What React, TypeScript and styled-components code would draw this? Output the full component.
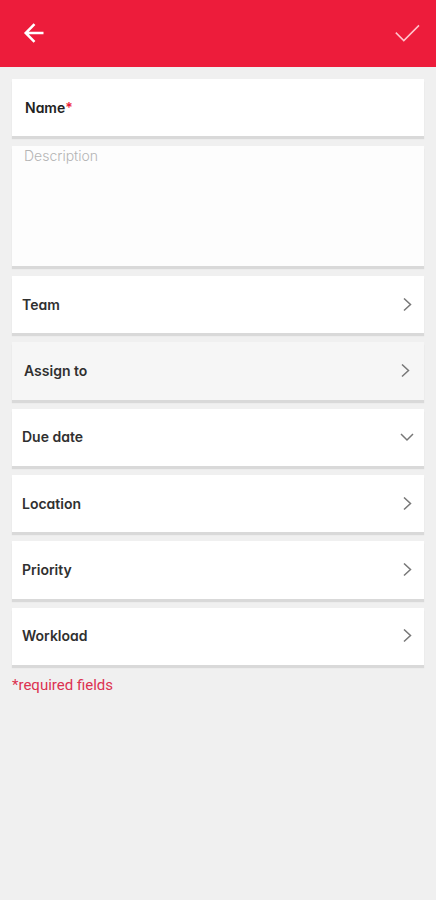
import React from "react";
import styled, { createGlobalStyle, css } from "styled-components";

const GlobalStyle = createGlobalStyle`
  * { box-sizing: border-box; }
  body { margin: 0; background: #f0f0f0; }
  button, input, textarea { font: inherit; color: inherit; border: 0; margin: 0; border-radius: 0; }
`;

const Page = styled.div`
  min-height: 100vh;
  background: #f0f0f0;
  color: #303030;
  font-family: Inter, Lato, "Liberation Sans", sans-serif;
  font-feature-settings: "cv11";
  font-size: 14px;
  line-height: 20px;
`;

const TopBar = styled.header`
  display: flex;
  align-items: center;
  justify-content: space-between;
  height: 67px;
  padding: 0 16px 0 22px;
  background: #ed1c3b;
`;

const IconButton = styled.button`
  display: flex;
  padding: 0;
  background: none;
  color: #fff;
  cursor: pointer;
`;

const Form = styled.form`
  display: flex;
  flex-direction: column;
  padding: 12px 12px 0;
`;

const card = css`
  background: #fff;
  box-shadow: 0 3px 1px #d9d9d9;
`;

const NameField = styled.label`
  ${card}
  display: flex;
  align-items: center;
  height: 57px;
  padding: 0 13px;
  font-weight: 600;
  color: #222;
`;

const Star = styled.span`
  color: #ed1c3b;
`;

const NameInput = styled.input`
  flex: 1;
  min-width: 0;
  padding: 0 8px;
  background: transparent;
  outline: none;
  font-weight: 400;
`;

const Description = styled.textarea`
  ${card}
  display: block;
  width: 100%;
  height: 120px;
  margin: 10px 0;
  padding: 0 12px;
  background: #fdfdfd;
  outline: none;
  resize: none;
  &::placeholder {
    color: #b4b4b4;
    font-weight: 300;
    opacity: 1;
  }
`;

const Options = styled.div`
  display: grid;
  grid-auto-rows: 1fr;
  gap: 9px;
  min-height: 389px;
`;

const OptionRow = styled.button<{ $active?: boolean }>`
  ${card}
  display: flex;
  align-items: center;
  justify-content: space-between;
  width: 100%;
  padding: ${(p) => (p.$active ? "0 12px" : "0 10px")};
  font-weight: 600;
  text-align: left;
  cursor: pointer;
  ${(p) => p.$active && "background: #f6f6f6;"}
`;

const RequiredNote = styled.p`
  margin: 10px 0 0;
  font-family: Roboto, "Liberation Sans", sans-serif;
  font-size: 15px;
  color: #dc3250;
`;

const BackIcon = () => (
  <svg width="24" height="22" viewBox="0 0 24 22" fill="none" stroke="currentColor" strokeWidth="2.5" aria-hidden="true">
    <path d="M21.5 10H3.5M12.5 1.2 3.7 10l8.8 8.8" />
  </svg>
);

const CheckIcon = () => (
  <svg width="26" height="22" viewBox="0 0 26 22" fill="none" stroke="#ffc4cc" strokeWidth="1.5" aria-hidden="true">
    <path d="M1.8 9.6 9.8 17.6 25 2.4" />
  </svg>
);

const Chevron = ({ down }: { down?: boolean }) => (
  <svg width="14" height="14" viewBox="0 0 14 14" fill="none" stroke="#777" strokeWidth="1.5" aria-hidden="true">
    <path d={down ? "M1 4 7 10l6-6" : "M4 0.5 10.5 6.5 4 12.5"} />
  </svg>
);

const options = [
  { label: "Team" },
  { label: "Assign to", active: true },
  { label: "Due date", down: true },
  { label: "Location" },
  { label: "Priority" },
  { label: "Workload" },
];

export default function App() {
  return (
    <Page>
      <GlobalStyle />
      <TopBar>
        <IconButton type="button" aria-label="Back">
          <BackIcon />
        </IconButton>
        <IconButton type="submit" form="task-form" aria-label="Save">
          <CheckIcon />
        </IconButton>
      </TopBar>
      <Form id="task-form" onSubmit={(e) => e.preventDefault()}>
        <NameField htmlFor="task-name">
          Name<Star>*</Star>
          <NameInput id="task-name" type="text" required />
        </NameField>
        <Description aria-label="Description" placeholder="Description" />
        <Options>
          {options.map((o) => (
            <OptionRow key={o.label} type="button" $active={o.active}>
              {o.label}
              <Chevron down={o.down} />
            </OptionRow>
          ))}
        </Options>
        <RequiredNote>*required fields</RequiredNote>
      </Form>
    </Page>
  );
}
